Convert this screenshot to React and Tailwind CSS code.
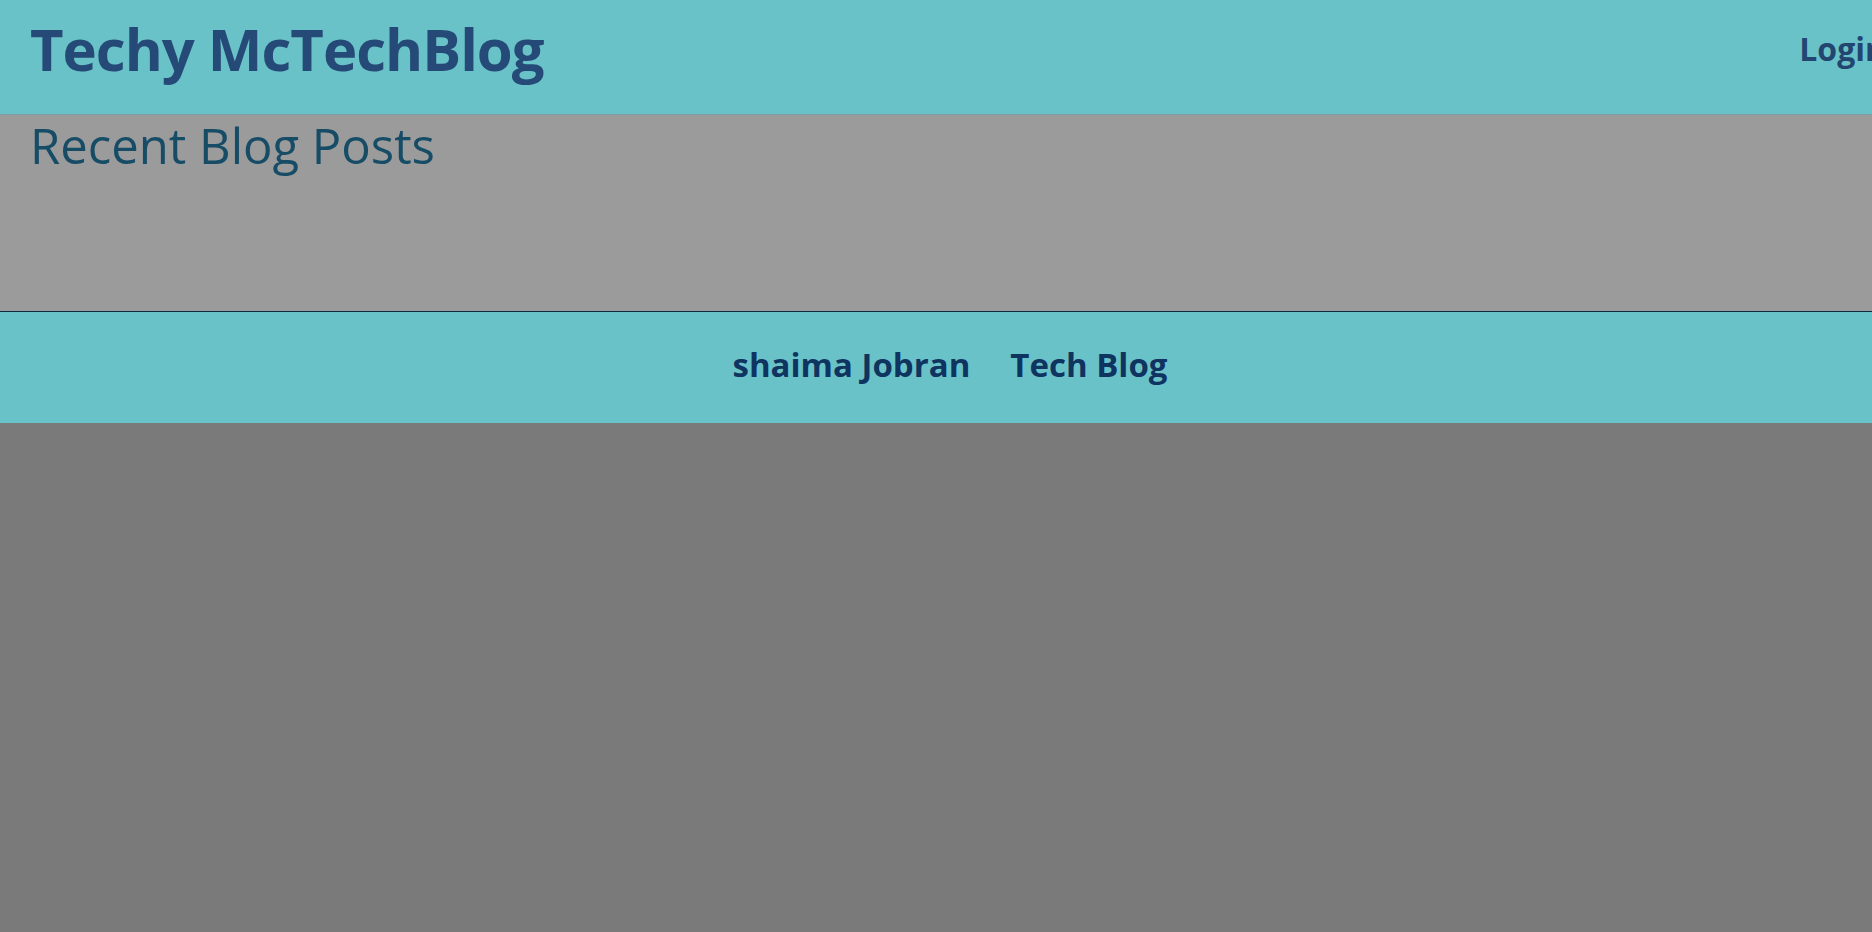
const App = () => {
  return (
    <div
      className="min-h-screen w-full overflow-hidden bg-[#7a7a7a]"
      style={{ fontFamily: '"Open Sans", "Noto Sans", sans-serif' }}
    >
      <header className="h-[115px] bg-[#6ac2c9] border-b border-[#7f9ea3] flex items-center justify-between pl-[30px]">
        <h1 className="text-[58px] font-bold leading-none text-[#264a77] tracking-[-1px] -mt-[16px]">
          Techy McTechBlog
        </h1>
        <a className="text-[32px] font-bold text-[#22466f] -mr-[14px] -mt-[16px] whitespace-nowrap">
          Login
        </a>
      </header>

      <main className="h-[197px] bg-[#9b9b9b] border-b border-[#0d2a40] pl-[30px]">
        <h2 className="text-[49px] leading-none text-[#164c66] pt-[6px]">
          Recent Blog Posts
        </h2>
      </main>

      <footer className="h-[111px] bg-[#6ac2c9] flex items-center justify-center gap-[40px] pb-[6px] pl-[28px]">
        <span className="text-[33px] font-bold text-[#0f3460]">
          shaima Jobran
        </span>
        <span className="text-[33px] font-bold text-[#0f3460]">
          Tech Blog
        </span>
      </footer>
    </div>
  );
};

export default App;
